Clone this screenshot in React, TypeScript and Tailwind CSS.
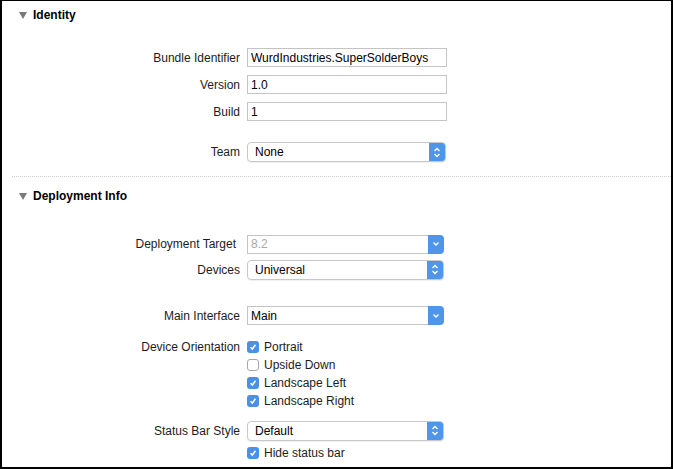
import React from 'react'

function Disclosure({ title }: { title: string }) {
  return (
    <div className="flex h-[28px] items-center pl-[17px]">
      <svg width="8" height="7" viewBox="0 0 8 7" className="mr-[6px]">
        <path d="M0 0 H8 L4 7 Z" fill="#7a7a7a" />
      </svg>
      <span className="font-bold text-[12px] text-black">{title}</span>
    </div>
  )
}

function Row({ label, children, className = '', labelPad = '' }: { label: string; children?: React.ReactNode; className?: string; labelPad?: string }) {
  return (
    <div className={`flex items-center ${className}`}>
      <div className={`w-[238px] shrink-0 whitespace-nowrap text-right text-[12px] text-[#1c1c1c] overflow-hidden ${labelPad}`}>{label}</div>
      <div className="ml-[7px] flex items-center">{children}</div>
    </div>
  )
}

function TextField({ value }: { value: string }) {
  return (
    <div className="flex h-[19px] w-[200px] items-center border border-[#c4c4c4] bg-white pl-[3px] text-[12px] text-black">
      {value}
    </div>
  )
}

function UpDown() {
  return (
    <svg width="8" height="11" viewBox="0 0 8 11">
      <path d="M1.5 4 L4 1.5 L6.5 4 M1.5 7 L4 9.5 L6.5 7" fill="none" stroke="white" strokeWidth="1.4" />
    </svg>
  )
}

function Down() {
  return (
    <svg width="8" height="6" viewBox="0 0 8 6">
      <path d="M1.5 1.5 L4 4 L6.5 1.5" fill="none" stroke="white" strokeWidth="1.4" />
    </svg>
  )
}

function Popup({ value, w = 'w-[197px]' }: { value: string; w?: string }) {
  return (
    <div className={`flex h-[20px] ${w} items-stretch overflow-hidden rounded-[4px] border border-[#c8c8c8] bg-white shadow-[0_1px_0_rgba(0,0,0,0.06)]`}>
      <div className="flex flex-1 items-center pl-[7px] text-[12px] text-black">{value}</div>
      <div className="flex w-[16px] items-center justify-center bg-[#4f95ea]">
        <UpDown />
      </div>
    </div>
  )
}

function Combo({ value, muted }: { value: string; muted?: boolean }) {
  return (
    <div className="flex h-[19px] w-[197px] items-stretch">
      <div className={`flex flex-1 items-center border border-r-0 border-[#c4c4c4] bg-white pl-[3px] text-[12px] ${muted ? 'text-[#a9a9a9]' : 'text-black'}`}>
        {value}
      </div>
      <div className="flex w-[16px] items-center justify-center rounded-r-[4px] bg-[#4f95ea]">
        <Down />
      </div>
    </div>
  )
}

function Check({ checked, label }: { checked: boolean; label: string }) {
  return (
    <div className="flex h-[18px] items-center">
      {checked ? (
        <div className="flex h-[12px] w-[12px] items-center justify-center rounded-[3px] bg-[#4a90e6]">
          <svg width="8" height="8" viewBox="0 0 8 8">
            <path d="M1.5 4.2 L3.3 6 L6.5 1.8" fill="none" stroke="white" strokeWidth="1.5" />
          </svg>
        </div>
      ) : (
        <div className="h-[12px] w-[12px] rounded-[3px] border border-[#a8a8a8] bg-white" />
      )}
      <span className="ml-[5px] text-[12px] text-[#1c1c1c]">{label}</span>
    </div>
  )
}

export default function App() {
  return (
    <div className="box-border h-[469px] w-[673px] overflow-hidden border-b-2 border-l-2 border-r-2 border-t border-black bg-white font-['Liberation_Sans',Arial,sans-serif]">
      <Disclosure title="Identity" />

      <Row label="Bundle Identifier" className="mt-[19px] h-[19px]">
        <TextField value="WurdIndustries.SuperSolderBoys" />
      </Row>
      <Row label="Version" className="mt-[8px] h-[19px]">
        <TextField value="1.0" />
      </Row>
      <Row label="Build" className="mt-[8px] h-[19px]">
        <TextField value="1" />
      </Row>
      <Row label="Team" className="mt-[21px] h-[20px]">
        <Popup value="None" w="w-[199px]" />
      </Row>

      <div className="ml-[10px] mt-[14px] border-t border-dotted border-[#cfcfcf]" />

      <div className="mt-[5px]">
        <Disclosure title="Deployment Info" />
      </div>

      <Row label="Deployment Target" labelPad="pr-[4px]" className="mt-[25px] h-[18px]">
        <Combo value="8.2" muted />
      </Row>
      <Row label="Devices" className="mt-[7px] h-[19px]">
        <Popup value="Universal" />
      </Row>
      <Row label="Main Interface" className="mt-[27px] h-[19px]">
        <Combo value="Main" />
      </Row>

      <div className="mt-[13px] flex">
        <div className="w-[238px] shrink-0 whitespace-nowrap pt-[2px] text-right text-[12px] leading-[14px] text-[#1c1c1c]">Device Orientation</div>
        <div className="ml-[7px] flex flex-col">
          <Check checked label="Portrait" />
          <Check checked={false} label="Upside Down" />
          <Check checked label="Landscape Left" />
          <Check checked label="Landscape Right" />
        </div>
      </div>

      <Row label="Status Bar Style" className="mt-[11px] h-[19px]">
        <Popup value="Default" />
      </Row>
      <div className="mt-[4px] flex">
        <div className="w-[238px] shrink-0" />
        <div className="ml-[7px]">
          <Check checked label="Hide status bar" />
        </div>
      </div>
    </div>
  )
}
